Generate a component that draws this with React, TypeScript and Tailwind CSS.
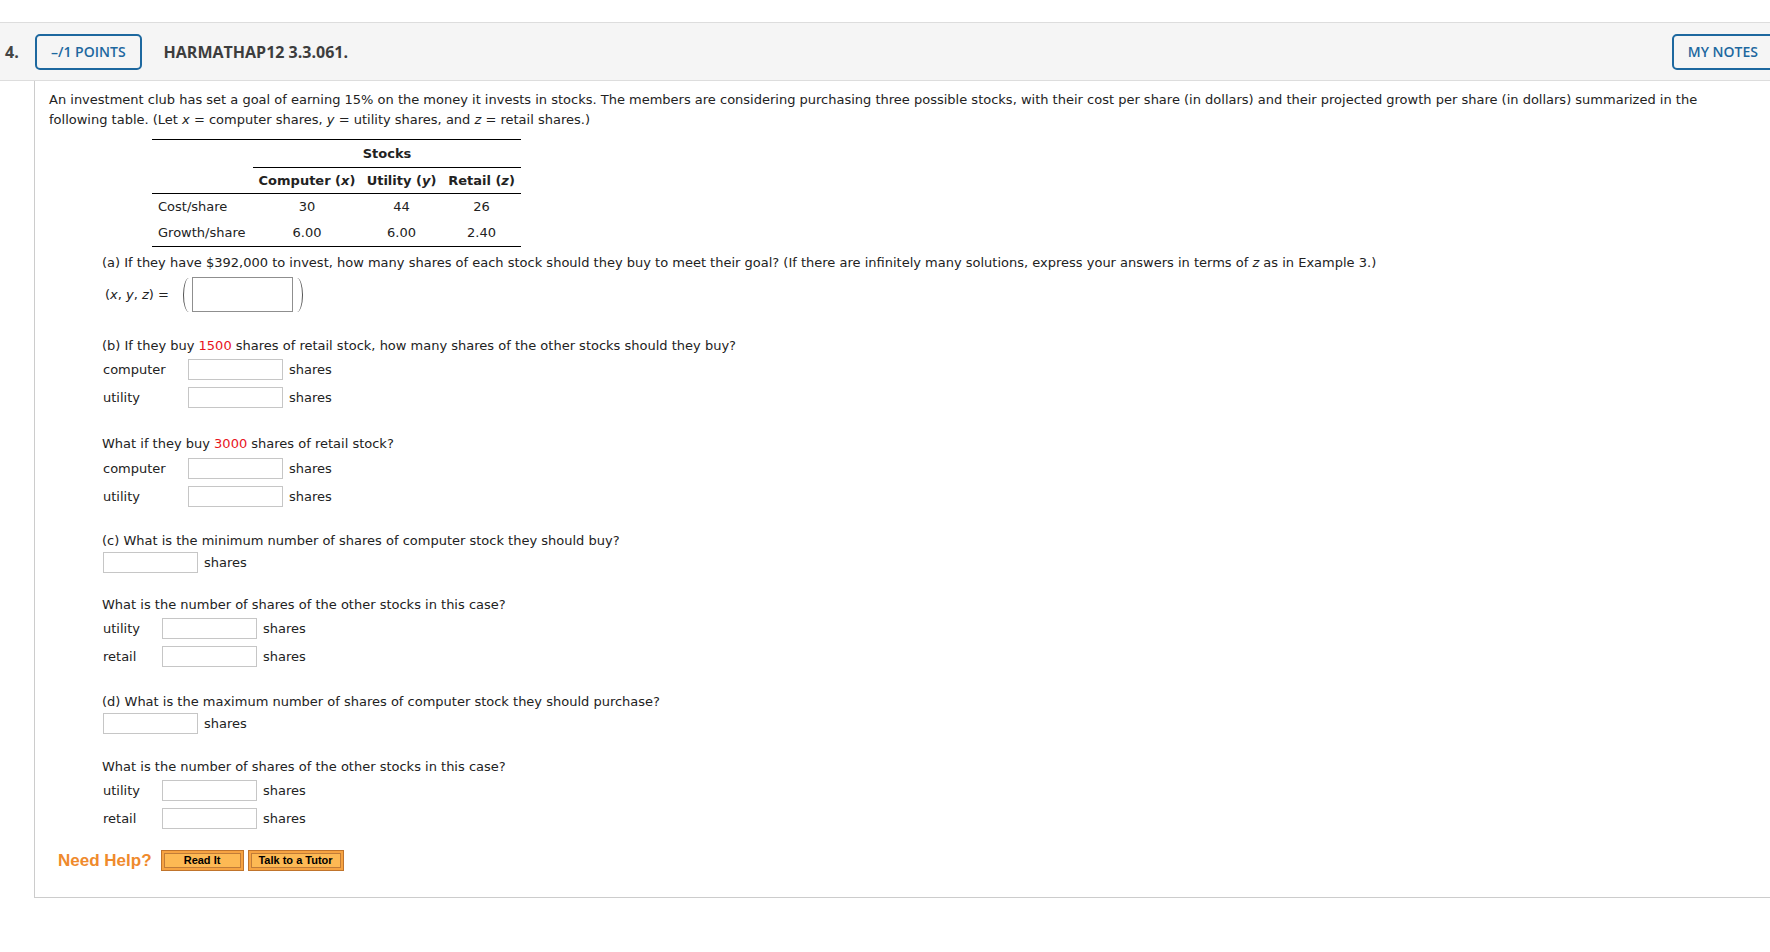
import React from 'react';

// shared text styles
const verdana = "font-['DejaVu_Sans',Verdana,sans-serif]";
const openSans = "font-['Open_Sans',sans-serif]";
const arial = "font-['Liberation_Sans',Arial,sans-serif]";

function Red({ children }: { children: React.ReactNode }) {
  return <span className="text-[#e8141c]">{children}</span>;
}

function AnswerInput() {
  return <input type="text" className="w-[95px] h-[21px] border border-[#c6c6c6] bg-white outline-none" />;
}

function ShareRow({ label, labelClass, className = '' }: { label: string; labelClass: string; className?: string }) {
  return (
    <div className={`flex items-center h-[21px] ${className}`}>
      <span className={`${labelClass} pl-[1px]`}>{label}</span>
      <AnswerInput />
      <span className="ml-[6px]">shares</span>
    </div>
  );
}

function OrangeButton({ label, width }: { label: string; width: string }) {
  return (
    <button className={`${width} h-[21px] border border-[#c0742c] bg-[#f6a342] p-[2px]`}>
      <span className={`block h-full border border-[#c17c38] bg-[#fdb954] ${arial} text-[11px] font-bold leading-[13px] text-black`}>
        {label}
      </span>
    </button>
  );
}

export default function App() {
  return (
    <div className={`w-full min-h-screen overflow-hidden bg-white ${verdana} text-[13px] leading-[20px] text-[#222]`}>
      {/* question header */}
      <div className="mt-[22px] h-[59px] border-y border-[#dddddd] bg-[#f5f5f5] flex items-center">
        <span className={`ml-[5px] w-[30px] ${openSans} text-[16px] font-bold text-[#444]`}>4.</span>
        <div className={`h-[36px] px-[14px] border-2 border-[#1d689f] rounded-[5px] flex items-center ${openSans} text-[14px] font-semibold text-[#1d689f]`}>
          –/1 POINTS
        </div>
        <span className={`ml-[22px] ${openSans} text-[16px] font-bold text-[#3d3d3d]`}>HARMATHAP12 3.3.061.</span>
        <div className={`ml-auto -mr-[4px] h-[36px] px-[14px] border-2 border-[#1d689f] rounded-[5px] flex items-center ${openSans} text-[14px] font-semibold text-[#1d689f]`}>
          MY NOTES
        </div>
      </div>

      {/* question body */}
      <div className="ml-[34px] border-l border-b border-[#cccccc] pt-[9px] pl-[14px] pb-[26px]">
        <p className="w-[1680px]">
          An investment club has set a goal of earning 15% on the money it invests in stocks. The members are considering purchasing three possible stocks, with their cost per share (in dollars) and their projected growth per share (in dollars) summarized in the following table. (Let <i>x</i> = computer shares, <i>y</i> = utility shares, and <i>z</i> = retail shares.)
        </p>

        {/* stocks table */}
        <div className="ml-[103px] mt-[9px] w-[369px] border-y border-black">
          <div className="flex h-[28px]">
            <div className="w-[101px]" />
            <div className="flex-1 border-b border-black flex items-center justify-center font-bold">Stocks</div>
          </div>
          <div className="grid grid-cols-[101px_108px_81px_79px] h-[26px] items-center border-b border-black font-bold text-center">
            <span />
            <span>Computer (<i>x</i>)</span>
            <span>Utility (<i>y</i>)</span>
            <span>Retail (<i>z</i>)</span>
          </div>
          <div className="grid grid-cols-[101px_108px_81px_79px] h-[26px] items-center text-center">
            <span className="text-left pl-[6px]">Cost/share</span>
            <span>30</span>
            <span>44</span>
            <span>26</span>
          </div>
          <div className="grid grid-cols-[101px_108px_81px_79px] h-[26px] items-center text-center">
            <span className="text-left pl-[6px]">Growth/share</span>
            <span>6.00</span>
            <span>6.00</span>
            <span>2.40</span>
          </div>
        </div>

        <div className="ml-[53px]">
          {/* (a) */}
          <p className="mt-[6px]">
            (a) If they have $392,000 to invest, how many shares of each stock should they buy to meet their goal? (If there are infinitely many solutions, express your answers in terms of <i>z</i> as in Example 3.)
          </p>
          <div className="mt-[4px] flex items-center h-[35px] pl-[3px]">
            <span className="w-[72px]">(<i>x</i>, <i>y</i>, <i>z</i>) =</span>
            <span className="ml-[6px] w-[6px] h-[34px] border-l-[1.5px] border-[#555] rounded-l-[100%_50%]" />
            <input type="text" className="ml-[3px] w-[101px] h-[35px] border border-[#8f8f8f] bg-white outline-none" />
            <span className="ml-[4px] w-[6px] h-[34px] border-r-[1.5px] border-[#555] rounded-r-[100%_50%]" />
          </div>

          {/* (b) */}
          <p className="mt-[24px]">
            (b) If they buy <Red>1500</Red> shares of retail stock, how many shares of the other stocks should they buy?
          </p>
          <ShareRow className="mt-[3px]" label="computer" labelClass="w-[86px]" />
          <ShareRow className="mt-[7px]" label="utility" labelClass="w-[86px]" />

          <p className="mt-[26px]">
            What if they buy <Red>3000</Red> shares of retail stock?
          </p>
          <ShareRow className="mt-[4px]" label="computer" labelClass="w-[86px]" />
          <ShareRow className="mt-[7px]" label="utility" labelClass="w-[86px]" />

          {/* (c) */}
          <p className="mt-[24px]">(c) What is the minimum number of shares of computer stock they should buy?</p>
          <div className="mt-[1px] ml-[1px] flex items-center h-[21px]">
            <AnswerInput />
            <span className="ml-[6px]">shares</span>
          </div>

          <p className="mt-[22px]">What is the number of shares of the other stocks in this case?</p>
          <ShareRow className="mt-[3px]" label="utility" labelClass="w-[60px]" />
          <ShareRow className="mt-[7px]" label="retail" labelClass="w-[60px]" />

          {/* (d) */}
          <p className="mt-[25px]">(d) What is the maximum number of shares of computer stock they should purchase?</p>
          <div className="mt-[1px] ml-[1px] flex items-center h-[21px]">
            <AnswerInput />
            <span className="ml-[6px]">shares</span>
          </div>

          <p className="mt-[23px]">What is the number of shares of the other stocks in this case?</p>
          <ShareRow className="mt-[3px]" label="utility" labelClass="w-[60px]" />
          <ShareRow className="mt-[7px]" label="retail" labelClass="w-[60px]" />
        </div>

        {/* help */}
        <div className="mt-[21px] ml-[9px] flex items-center h-[21px]">
          <span className={`${arial} text-[17px] font-bold text-[#ef8a2c]`}>Need Help?</span>
          <div className="ml-[9px] flex gap-[4px]">
            <OrangeButton label="Read It" width="w-[83px]" />
            <OrangeButton label="Talk to a Tutor" width="w-[96px]" />
          </div>
        </div>
      </div>
    </div>
  );
}
